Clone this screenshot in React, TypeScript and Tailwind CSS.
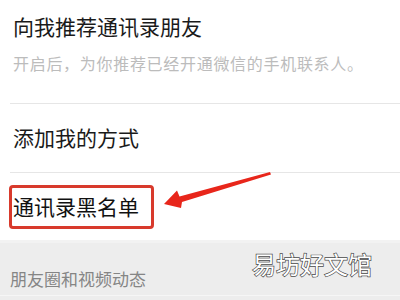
import React from "react";

const font = { fontFamily: '"Noto Sans CJK SC", "Noto Sans", sans-serif' };

export default function App() {
  return (
    <div className="relative w-[400px] h-[300px] overflow-hidden bg-white [text-spacing-trim:space-all]" style={font}>
      <div className="flex flex-col">
        <div className="flex flex-col h-[103px] pl-[13px] pt-[12px]">
          <div className="text-[21px] leading-[28px] text-[#1a1a1a]">向我推荐通讯录朋友</div>
          <div className="mt-[12px] text-[16px] leading-[22px] tracking-[0.7px] text-[#bcbcbc] whitespace-nowrap">
            开启后，为你推荐已经开通微信的手机联系人。
          </div>
        </div>
        <div className="ml-[10px] h-px bg-[#e6e6e6]" />
        <div className="flex items-center h-[68px] pl-[13px] text-[21px] text-[#1a1a1a]">添加我的方式</div>
        <div className="ml-[10px] h-px bg-[#e6e6e6]" />
        <div className="flex items-center h-[67px] pl-[9px]">
          <div className="flex items-center h-[44px] w-[145px] border-[3px] border-[#d83a2c] rounded-[4px] pl-[1px] text-[21px] text-[#111]">
            通讯录黑名单
          </div>
        </div>
        <div className="flex flex-col h-[60px] bg-[#ededed] border-t-[3px] border-[#f2f2f2]">
          <div className="flex items-center h-[52px] pt-[20px] pl-[10px] text-[17px] text-[#858585]">朋友圈和视频动态</div>
          <div className="h-px bg-[#f6f6f6] mt-auto mb-[4px]" />
        </div>
      </div>
      <div
        className="absolute left-[252px] top-[248px] text-[24px] leading-[32px] text-white [-webkit-text-stroke:1.4px_#4a4a4a] [paint-order:stroke_fill]"
      >
        易坊好文馆
      </div>
      <svg className="absolute left-0 top-0" width="400" height="300" viewBox="0 0 400 300">
        <polygon
          points="164,204 177,190.5 179.5,196.5 270,172 271,174.5 182,202 181,208"
          fill="#e8261b"
        />
      </svg>
    </div>
  );
}
